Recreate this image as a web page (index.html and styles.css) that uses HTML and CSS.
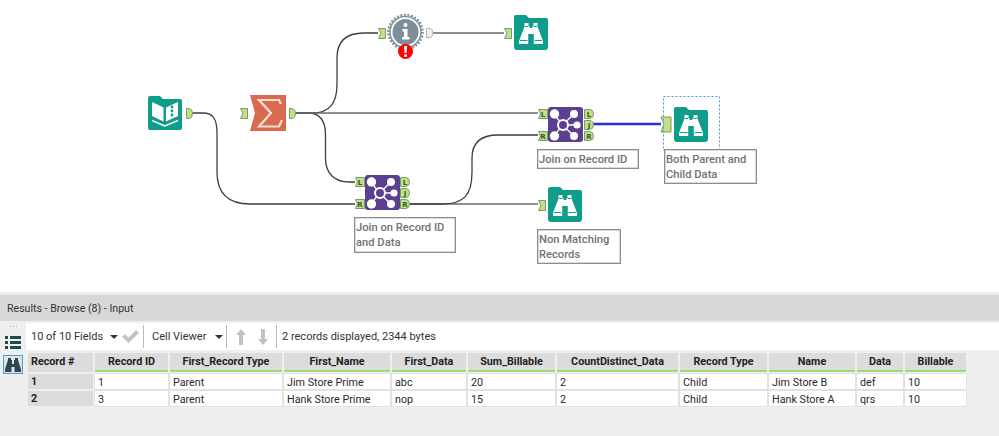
FILE: index.html
```html
<!DOCTYPE html>
<html lang="en">
<head>
<meta charset="utf-8">
<title>Results - Browse</title>
<link rel="stylesheet" href="styles.css">
</head>
<body>
<main class="app">
  <section class="canvas">
    <svg class="diagram" width="999" height="292" viewBox="0 0 999 292" xmlns="http://www.w3.org/2000/svg">
      <defs>
        <symbol id="browse" viewBox="0 0 34 35" width="34" height="35">
          <path class="teal" d="M2 0H12L15 3H32Q34 3 34 5V32Q34 35 31 35H3Q0 35 0 32V2Q0 0 2 0Z"/>
          <path class="white" d="M10.500 8H14.500V11.500H15.500L15.800 13H18.200L18.500 11.500H19.500V8H23.500V11.500L29 26V29H19.800V19H14.200V29H5V26L10.500 11.500Z"/>
          <path class="tealline" d="M6 25.500H13.500M20.500 25.500H28M11 11.500H14M20 11.500H23"/>
        </symbol>
        <symbol id="join" viewBox="0 0 35 35" width="35" height="35">
          <rect class="purple" width="35" height="35" rx="3"/>
          <path class="joinline" d="M14.500 18L6 7M14.500 18L26 7M14.500 18H28M14.500 18L26 29M14.500 18L6 29"/>
          <circle class="white" cx="6.500" cy="7" r="4.700"/>
          <circle class="white" cx="26" cy="7" r="4"/>
          <circle class="white" cx="29" cy="18" r="3.600"/>
          <circle class="white" cx="26" cy="29" r="4"/>
          <circle class="white" cx="6.500" cy="29" r="4.700"/>
          <circle class="joinhub" cx="15" cy="18" r="5"/>
        </symbol>
        <symbol id="in" viewBox="0 0 8 11" width="8" height="11">
          <path class="anchor" d="M.5.500H7.500V10.500H.5L3 5.500Z"/>
        </symbol>
        <symbol id="out" viewBox="0 0 7 11" width="7" height="11">
          <path class="anchor" d="M.5.500H3Q6.500 1 6.500 5.500T3 10.500H.5Z"/>
        </symbol>
        <symbol id="tagin" viewBox="0 0 10 10" width="10" height="10">
          <path class="anchor" d="M.5.500H9.500V9.500H.5L2.500 5Z"/>
        </symbol>
        <symbol id="tagout" viewBox="0 0 10 10" width="10" height="10">
          <path class="anchor" d="M.5.500H6Q9.500 1 9.500 5T6 9.500H.5Z"/>
        </symbol>
      </defs>

      <g class="wires">
        <path d="M192 113H203C213 113 217 119 217 133V172C217 194 228 204 250 204H355"/>
        <path d="M295 113H308C320 113 325.500 120 325.500 135V158C325.500 174 335 182 349 182H355"/>
        <path d="M295 113H312C330 113 337 103 337 84V58C337 41 346 33 364 33H378"/>
        <path class="soft" d="M295 113H538"/>
        <path class="soft" d="M408 204H538"/>
        <path d="M408 204H442C464 204 472 195 472 172V158C472 143 481 135 498 135H538"/>
        <path class="soft" d="M433 33H504"/>
      </g>
      <path class="wire-active" d="M593 124H661"/>

      <!-- input tool -->
      <g transform="translate(148 96)">
        <path class="teal" d="M2 0H12L15 3H32Q34 3 34 5V32Q34 34 32 34H2Q0 34 0 32V2Q0 0 2 0Z"/>
        <path class="white" d="M4 6L15.500 11.500V25.500L4 20Z"/>
        <path class="white" d="M18 11.500L30 6V20L18 25.500Z"/>
        <circle class="teal" cx="24" cy="11" r="1.400"/>
        <circle class="teal" cx="24" cy="15" r="1.400"/>
        <circle class="teal" cx="24" cy="19" r="1.400"/>
        <path class="whiteline" d="M4 24.500L16.800 30L30 24.500"/>
      </g>
      <use href="#out" x="186" y="108"/>

      <!-- summarize tool -->
      <use href="#in" x="240" y="108"/>
      <path class="sum" d="M250 95H286V131H250L255 113Z"/>
      <path class="sigma" d="M281 104L279 100H259L271 113L259 126.500H279L282 120"/>
      <use href="#out" x="289" y="108"/>

      <!-- message tool -->
      <use href="#in" x="378" y="28"/>
      <circle class="gear-teeth" cx="405.500" cy="32" r="16.800"/>
      <circle class="gear-band" cx="405.500" cy="32" r="15.500"/>
      <circle class="gear-ring" cx="405.500" cy="32" r="13"/>
      <circle class="white" cx="405.500" cy="25" r="2"/>
      <path class="white" d="M402.500 29H407.500V37H409.500V39.500H402V37H404V31.500H402.500Z"/>
      <circle class="badge" cx="405.500" cy="51.500" r="7.500"/>
      <path class="white" d="M404 46H407L406.500 53H404.500Z"/>
      <circle class="white" cx="405.500" cy="55.500" r="1.500"/>
      <path class="anchor-off" d="M426.500 28.500H430Q433 29 433 33T430 37.500H426.500Z"/>

      <!-- browse tools -->
      <use href="#in" x="504" y="28"/>
      <use href="#browse" x="514" y="15"/>

      <use href="#tagin" x="538" y="109"/>
      <use href="#tagin" x="538" y="131"/>
      <text class="tag" x="543" y="117">L</text>
      <text class="tag" x="543" y="139">R</text>
      <use href="#join" x="548" y="107"/>
      <use href="#tagout" x="584" y="109"/>
      <use href="#tagout" x="584" y="120"/>
      <use href="#tagout" x="584" y="131"/>
      <text class="tag" x="589" y="117">L</text>
      <text class="tag" x="589" y="128">J</text>
      <text class="tag" x="589" y="139">R</text>

      <path class="anchor" d="M661 117H671V132H661L664 124.500Z"/>
      <use href="#browse" x="674" y="107"/>
      <rect class="selection" x="663.500" y="96.500" width="56" height="54"/>

      <use href="#tagin" x="355" y="177"/>
      <use href="#tagin" x="355" y="199"/>
      <text class="tag" x="360" y="185">L</text>
      <text class="tag" x="360" y="207">R</text>
      <use href="#join" x="365" y="175"/>
      <use href="#tagout" x="400" y="177"/>
      <use href="#tagout" x="400" y="188"/>
      <use href="#tagout" x="400" y="199"/>
      <text class="tag" x="405" y="185">L</text>
      <text class="tag" x="405" y="196">J</text>
      <text class="tag" x="405" y="207">R</text>

      <use href="#in" x="538" y="200"/>
      <use href="#browse" x="548" y="187"/>
    </svg>

    <div class="note note-join-top">Join on Record ID</div>
    <div class="note note-both">Both Parent and<br>Child Data</div>
    <div class="note note-join-low">Join on Record ID<br>and Data</div>
    <div class="note note-non">Non Matching<br>Records</div>
  </section>

  <section class="results">
    <header class="results-title">Results - Browse (8) - Input</header>
    <div class="results-body">
      <aside class="rail">
        <div class="rail-dots">
          <i></i><i></i><i></i>
        </div>
        <svg class="rail-list" width="16" height="15" viewBox="0 0 16 15" xmlns="http://www.w3.org/2000/svg">
          <path d="M0 1H3V4H0ZM5 1H16V4H5ZM0 6H3V9H0ZM5 6H16V9H5ZM0 11H3V14H0ZM5 11H16V14H5Z"/>
        </svg>
        <div class="rail-button">
          <svg width="16" height="14" viewBox="0 0 16 14" xmlns="http://www.w3.org/2000/svg">
            <path d="M3 0H6V2H7V6H9V2H10V0H13V2L16 11V14H9.500V9H6.500V14H0V11L3 2Z"/>
          </svg>
        </div>
      </aside>
      <div class="main">
        <div class="toolbar">
          <span class="tool-fields">10 of 10 Fields</span>
          <span class="caret caret-fields"></span>
          <svg class="check" width="17" height="13" viewBox="0 0 17 13" xmlns="http://www.w3.org/2000/svg">
            <path d="M0 7L3 4L6.500 7.500L14 0L17 3L6.500 13Z"/>
          </svg>
          <span class="sep sep-fields"></span>
          <span class="tool-viewer">Cell Viewer</span>
          <span class="caret caret-viewer"></span>
          <span class="sep sep-viewer"></span>
          <svg class="arrow arrow-up" width="10" height="16" viewBox="0 0 10 16" xmlns="http://www.w3.org/2000/svg">
            <path d="M5 0L10 6H7V16H3V6H0Z"/>
          </svg>
          <svg class="arrow arrow-down" width="10" height="16" viewBox="0 0 10 16" xmlns="http://www.w3.org/2000/svg">
            <path d="M3 0H7V10H10L5 16L0 10H3Z"/>
          </svg>
          <span class="sep sep-arrows"></span>
          <span class="tool-info">2 records displayed, 2344 bytes</span>
        </div>
        <div class="grid">
          <div class="cell corner">Record #</div>
          <div class="cell head">Record ID</div>
          <div class="cell head">First_Record Type</div>
          <div class="cell head">First_Name</div>
          <div class="cell head">First_Data</div>
          <div class="cell head">Sum_Billable</div>
          <div class="cell head">CountDistinct_Data</div>
          <div class="cell head">Record Type</div>
          <div class="cell head">Name</div>
          <div class="cell head">Data</div>
          <div class="cell head">Billable</div>

          <div class="cell rowhead">1</div>
          <div class="cell data">1</div>
          <div class="cell data">Parent</div>
          <div class="cell data">Jim Store Prime</div>
          <div class="cell data">abc</div>
          <div class="cell data">20</div>
          <div class="cell data">2</div>
          <div class="cell data">Child</div>
          <div class="cell data">Jim Store B</div>
          <div class="cell data">def</div>
          <div class="cell data">10</div>

          <div class="cell rowhead">2</div>
          <div class="cell data">3</div>
          <div class="cell data">Parent</div>
          <div class="cell data">Hank Store Prime</div>
          <div class="cell data">nop</div>
          <div class="cell data">15</div>
          <div class="cell data">2</div>
          <div class="cell data">Child</div>
          <div class="cell data">Hank Store A</div>
          <div class="cell data">qrs</div>
          <div class="cell data">10</div>
        </div>
      </div>
    </div>
  </section>
</main>
</body>
</html>
```

FILE: styles.css
```css
* { box-sizing: border-box; }
html, body { margin: 0; padding: 0; background: #fff; }
body {
  width: 999px;
  height: 436px;
  overflow: hidden;
  font-family: Roboto, "Open Sans", sans-serif;
  font-size: 11px;
  color: #222;
}
.app { display: flex; flex-direction: column; height: 436px; }

/* Canvas */
.canvas { position: relative; height: 292px; background: #fff; flex: none; }
.diagram { position: absolute; left: 0; top: 0; display: block; }
.teal { fill: #0f9d8b; }
.white { fill: #fff; }
.tealline { fill: none; stroke: #0f9d8b; stroke-width: 1; }
.whiteline { fill: none; stroke: #fff; stroke-width: 1.5; }
.purple { fill: #5c3f8f; }
.joinline { fill: none; stroke: #fff; stroke-width: 1.300; }
.joinhub { fill: #5c3f8f; stroke: #fff; stroke-width: 2; }
.anchor { fill: #c8df7f; stroke: #6f9f70; stroke-width: 1; }
.anchor-off { fill: #f0f0f0; stroke: #b5b5b5; stroke-width: 1; }
.tag { font: bold 7px "DejaVu Sans", sans-serif; fill: #2f5a3a; text-anchor: middle; }
.wires path { fill: none; stroke: #3f3f3f; stroke-width: 1.300; }
.wires .soft { stroke: #6a6a6a; stroke-width: 1.500; }
.wire-active { fill: none; stroke: #2b2fd3; stroke-width: 2.500; }
.sum { fill: #d96a50; }
.sigma { fill: none; stroke: #f9e0d6; stroke-width: 2.200; }
.gear-teeth { fill: none; stroke: #84969f; stroke-width: 3; stroke-dasharray: 2 1.500; }
.gear-band { fill: #fff; stroke: #84969f; stroke-width: 1.600; }
.gear-ring { fill: #7c8f99; }
.badge { fill: #f00; }
.selection { fill: none; stroke: #3f9bf0; stroke-width: 1; stroke-dasharray: 2 2; }

.note {
  position: absolute;
  background: #fff;
  border: 1px solid #8c8c8c;
  box-shadow: inset 0 0 0 .5px #b5b5b5;
  color: #6f7175;
  font-size: 11.200px;
  line-height: 15px;
  font-weight: 500;
  padding: 2px 1px 0;
  white-space: nowrap;
}
.note-join-top { left: 537px; top: 149px; width: 102px; height: 20px; }
.note-both { left: 664px; top: 149px; width: 93px; height: 35px; }
.note-join-low { left: 354px; top: 217px; width: 102px; height: 36px; }
.note-non { left: 537px; top: 229px; width: 84px; height: 35px; }

/* Results */
.results { flex: 1; display: flex; flex-direction: column; background: #efefef; border-top: 3px solid #ececec; }
.results-title {
  flex: none;
  height: 26px;
  background: #d8d8d8;
  color: #333;
  font-size: 10.600px;
  line-height: 27px;
  padding-left: 7px;
}
.results-body { flex: 1; display: flex; min-height: 0; }

.rail { flex: none; width: 26px; display: flex; flex-direction: column; align-items: center; padding-top: 5px; }
.rail-dots { display: flex; gap: 2px; height: 2px; margin-bottom: 7px; }
.rail-dots i { width: 1px; height: 1px; background: #aaa; display: block; }
.rail-list { fill: #1f4a4a; margin-bottom: 5px; display: block; }
.rail-button {
  width: 20px;
  height: 19px;
  border: 1px solid #4a9be0;
  background: #e4e4e4;
  display: flex;
  align-items: center;
  justify-content: center;
}
.rail-button svg { fill: #2a4a50; display: block; }

.main { flex: 1; min-width: 0; padding-top: 2px; }
.toolbar {
  height: 27px;
  background: #fff;
  display: flex;
  align-items: center;
  padding-left: 5px;
  font-size: 11px;
  color: #333;
  white-space: nowrap;
}
.tool-fields { width: 75px; }
.caret { width: 0; height: 0; border-left: 4px solid transparent; border-right: 4px solid transparent; border-top: 4px solid #333; }
.caret-fields { margin-left: 4px; }
.check { fill: #c4c4c4; margin-left: 4px; }
.sep { width: 1px; height: 23px; background: #b9b9b9; }
.sep-fields { margin-left: 4px; }
.tool-viewer { margin-left: 8px; width: 63px; }
.sep-viewer { margin-left: 3px; }
.arrow { fill: #c2c2c2; }
.arrow-up { margin-left: 9px; }
.arrow-down { margin-left: 12px; }
.sep-arrows { margin-left: 8px; }
.tool-info { margin-left: 5px; }

.grid {
  display: grid;
  grid-template-columns: 65px 73px 112px 106px 74px 87px 121px 87px 86px 46px 61px;
  grid-template-rows: 19px 15px 15px;
  column-gap: 2px;
  row-gap: 2px;
  margin: 3px 0 0 2px;
  font-size: 10.750px;
}
.cell { white-space: nowrap; overflow: hidden; line-height: 15px; }
.head, .corner { background: #dcdcdc; font-weight: 700; color: #222; }
.head { text-align: center; border-bottom: 2px solid #99e070; line-height: 17px; }
.corner { padding-left: 3px; line-height: 18px; }
.rowhead { background: #dcdcdc; font-weight: 700; padding-left: 3px; }
.data { background: #fff; padding-left: 3px; box-shadow: 0 0 0 1px #e2e2e2; color: #2a2a2a; line-height: 17px; }
```
